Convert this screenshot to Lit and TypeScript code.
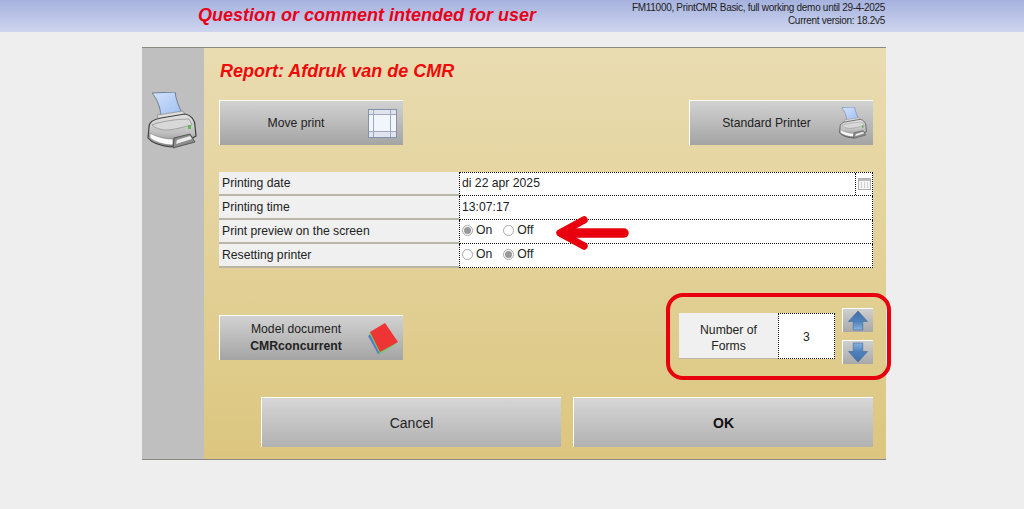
import { LitElement, html, css, svg } from "lit";
import { customElement } from "lit/decorators.js";

const printer = (id: string) => svg`
  <defs>
    <linearGradient id="${id}p" x1="0" y1="0" x2="1" y2="1"><stop offset="0" stop-color="#d5e3fb"/><stop offset="1" stop-color="#9dbdf2"/></linearGradient>
    <linearGradient id="${id}b" x1="0" y1="0" x2="0" y2="1"><stop offset="0" stop-color="#e4e4e4"/><stop offset=".6" stop-color="#bdbdbd"/><stop offset="1" stop-color="#7e7e7e"/></linearGradient>
  </defs>
  <path d="M5 1 L28 0 C29 8 32 15 35 21 L14 24 C13 14 10 7 5 1Z" fill="url(#${id}p)" stroke="#6f7f99" stroke-width="1"/>
  <path d="M10 23 L36 19 L39 25 L12 30Z" fill="#dcdcdc" stroke="#8a8a8a" stroke-width=".7"/>
  <path d="M2 35 C2 29 8 27 14 26 L38 22 C44 23 48 28 48 34 L49 44 C44 47 36 50 30 52 L24 55 C14 54 5 51 1 46Z" fill="url(#${id}b)" stroke="#3f3f3f" stroke-width="1.2"/>
  <path d="M5 33 C12 30 28 27 42 27 L45 33 C36 35 26 38 20 38 C14 38 8 36 5 33Z" fill="#d8d8d8" stroke="#8c8c8c" stroke-width=".7"/>
  <path d="M3 41 C10 45 18 47 26 47 L26 53 C17 53 8 50 3 46Z" fill="#fbfbfb" stroke="#777" stroke-width=".6"/>
  <path d="M27 46 L26 56 L48 50 L43 42Z" fill="#8c8c8c" stroke="#444" stroke-width=".8"/>
  <path d="M30 48 L43 44 L45 47 L29 52Z" fill="#ebebeb"/>
  <rect x="41" y="33" width="3" height="4" fill="#63b85e"/>
`;

const grid = svg`
  <rect x=".5" y=".5" width="28" height="28" fill="#f1f5fc" stroke="#8590ab"/>
  <rect x="1" y="1" width="27" height="5" fill="#dfe4ee"/>
  <rect x="1" y="23" width="27" height="5" fill="#dfe4ee"/>
  <path d="M5.5 1V28M22.5 1V28M1 5.5H28M1 22.5H28" stroke="#a0a8bd" fill="none"/>
`;

const book = svg`
  <path d="M0 13 L10 31 L15 29 L5 9Z" fill="#5a79c9"/>
  <path d="M1 10 L12 31 L28 21 L14 4Z" fill="#6ad06a"/>
  <path d="M17 0 L30 19 L12 29 L2 9Z" fill="#ee3434"/>
`;

const arrowDefs = (id: string, flip: boolean) => svg`
  <defs>
    <linearGradient id="${id}" x1="0" y1="${flip ? 1 : 0}" x2="0" y2="${flip ? 0 : 1}">
      <stop offset="0" stop-color="#3f6fa6"/><stop offset=".55" stop-color="#4f82bd"/><stop offset="1" stop-color="#89b3e2"/>
    </linearGradient>
  </defs>
`;
const up = svg`
  ${arrowDefs("ua", false)}
  <path d="M10 0 L20 11 L15 11 L15 20 L5 20 L5 11 L0 11Z" fill="url(#ua)" stroke="#3b6492" stroke-width=".6"/>
`;
const down = svg`
  ${arrowDefs("da", true)}
  <path d="M10 20 L20 9 L15 9 L15 0 L5 0 L5 9 L0 9Z" fill="url(#da)" stroke="#3b6492" stroke-width=".6"/>
`;

@customElement("app-root")
export class AppRoot extends LitElement {
  static styles = css`
    :host { display: block; width: 1024px; height: 509px; background: #eeeeee; font-family: "Liberation Sans", Arial, sans-serif; color: #111; position: relative; overflow: hidden; }
    .top { height: 32px; background: linear-gradient(#a6b2de, #cdd5ee); display: flex; box-sizing: border-box; }
    .question { margin-left: 198px; width: 340px; font: italic bold 18px/30px "Liberation Sans", sans-serif; color: #e8001a; white-space: nowrap; }
    .version { margin-left: 94px; width: 253px; font-size: 10px; letter-spacing: -.3px; line-height: 13px; text-align: right; padding-top: 1px; color: #222; white-space: nowrap; }
    .dialog { margin: 15px 0 0 142px; width: 744px; height: 413px; box-sizing: border-box; border-top: 1px solid #8a8a80; border-bottom: 1px solid #8a8a80; display: flex; }
    .side { width: 62px; background: #bfbfbf; padding: 44px 0 0 5px; box-sizing: border-box; }
    .side svg { display: block; }
    .main { width: 682px; box-sizing: border-box; padding: 13px 13px 0 15px; background: linear-gradient(#e9dcb1, #dcc67f); display: flex; flex-direction: column; }
    .title { font: italic bold 18px/20px "Liberation Sans", sans-serif; color: #ee0a0a; margin-left: 1px; white-space: nowrap; }
    .row { display: flex; justify-content: space-between; }
    .btn { width: 184px; height: 45px; box-sizing: border-box; border-top: 1px solid #fff; border-left: 1px solid #fff; background: linear-gradient(#d2d2d2, #a4a4a4); display: flex; align-items: center; font-size: 12.2px; position: relative; color: #222; }
    .btn .lbl { flex: 1; text-align: center; line-height: 17px; }
    .btn svg { flex: none; }
    .r1 { margin-top: 19px; }
    .r1 .lbl { padding-left: 4px; }
    .m1 svg { margin-right: 6px; }
    .m2 svg { margin-right: 6px; }
    .table { margin: 27px 0 0 0; width: 654px; display: flex; flex-direction: column; font-size: 12.2px; }
    .tr { display: flex; height: 24px; }
    .th { width: 240px; box-sizing: border-box; background: #f0f0f0; border-bottom: 2px solid #b9b6a6; padding: 0 0 0 3px; line-height: 23px; color: #222; }
    .td { flex: 1; box-sizing: border-box; background: #fff; border: 1px dotted #111; padding-left: 2px; line-height: 20px; display: flex; position: relative; color: #222; }
    .tr + .tr .td { border-top: 0; line-height: 22px; }
    .cal { margin-left: auto; width: 16px; border-left: 1px dotted #111; display: flex; align-items: center; justify-content: center; }
    .tr + .tr .radio { display: flex; align-items: center; padding-bottom: 3px; }
    .dot { width: 11px; height: 11px; box-sizing: border-box; border-radius: 50%; border: 1px solid #a8a8a8; background: #fff; margin-right: 3px; display: flex; align-items: center; justify-content: center; }
    .dot.on::after { content: ""; width: 7px; height: 7px; border-radius: 50%; background: #999; }
    .radio .t { margin-right: 11px; }
    .r3 { margin-top: 40px; align-items: flex-start; }
    .model { width: 184px; height: 45px; margin-top: 7px; }
    .model .lbl { padding-left: 4px; }
    .model svg { margin-right: 5px; }
    .forms { display: flex; width: 194px; margin-right: 0; }
    .flabel { margin-top: 5px; width: 99px; height: 46px; box-sizing: border-box; background: #f0f0f0; border-bottom: 1px solid #bdb9a8; text-align: center; font-size: 12.2px; line-height: 16px; padding-top: 9px; color: #222; }
    .fval { margin-top: 5px; width: 57px; height: 46px; box-sizing: border-box; background: #fff; border: 1px dotted #111; font-size: 12.2px; padding-top: 2px; display: flex; align-items: center; justify-content: center; color: #222; }
    .steps { margin-left: 7px; display: flex; flex-direction: column; gap: 8px; }
    .step { width: 31px; height: 24px; box-sizing: border-box; border-top: 1px solid #fff; border-left: 1px solid #fff; background: linear-gradient(#cfcfcf, #a8a8a8); display: flex; align-items: center; justify-content: center; }
    .r4 { margin-top: 33px; padding-left: 42px; justify-content: flex-start; gap: 12px; }
    .big { width: 300px; height: 50px; box-sizing: border-box; border-top: 1px solid #fff; border-left: 1px solid #fff; background: linear-gradient(#d6d6d6, #b2b2b2); display: flex; align-items: center; justify-content: center; font-size: 14px; color: #222; }
    .big b { color: #111; }
    .ring { position: absolute; left: 666px; top: 293px; width: 225px; height: 87px; box-sizing: border-box; border: 4px solid #e8000f; border-radius: 17px; pointer-events: none; }
    .arrow { position: absolute; left: 553px; top: 214px; pointer-events: none; }
  `;

  render() {
    return html`
      <div class="top">
        <div class="question">Question or comment intended for user</div>
        <div class="version">FM11000, PrintCMR Basic, full working demo until 29-4-2025<br />Current version: 18.2v5</div>
      </div>
      <div class="dialog">
        <div class="side">
          <svg width="50" height="57" viewBox="0 0 50 57">${printer("a")}</svg>
        </div>
        <div class="main">
          <div class="title">Report: Afdruk van de CMR</div>
          <div class="row r1">
            <div class="btn m1"><span class="lbl">Move print</span><svg width="29" height="29" viewBox="0 0 29 29">${grid}</svg></div>
            <div class="btn m2"><span class="lbl">Standard Printer</span><svg width="28" height="32" viewBox="0 0 50 57">${printer("b")}</svg></div>
          </div>
          <div class="table">
            <div class="tr"><div class="th">Printing date</div><div class="td">di 22 apr 2025
              <span class="cal"><svg width="13" height="12" viewBox="0 0 13 12"><rect x=".5" y=".5" width="12" height="11" fill="#f6f6f6" stroke="#b0b0b0"/><rect x="1" y="1" width="11" height="2" fill="#bcbcbc"/><path d="M3 5h1M6 5h1M9 5h1M3 7h1M6 7h1M9 7h1M3 9h1M6 9h1M9 9h1" stroke="#aaa"/></svg></span></div></div>
            <div class="tr"><div class="th">Printing time</div><div class="td">13:07:17</div></div>
            <div class="tr"><div class="th">Print preview on the screen</div><div class="td radio"><span class="dot on"></span><span class="t">On</span><span class="dot"></span><span class="t">Off</span></div></div>
            <div class="tr"><div class="th">Resetting printer</div><div class="td radio"><span class="dot"></span><span class="t">On</span><span class="dot on"></span><span class="t">Off</span></div></div>
          </div>
          <div class="row r3">
            <div class="btn model"><span class="lbl">Model document<br /><b>CMRconcurrent</b></span><svg width="30" height="31" viewBox="0 0 30 31">${book}</svg></div>
            <div class="forms">
              <div class="flabel">Number of<br />Forms</div>
              <div class="fval">3</div>
              <div class="steps">
                <div class="step"><svg width="20" height="21" viewBox="-.5 -.5 21 21">${up}</svg></div>
                <div class="step"><svg width="20" height="21" viewBox="-.5 -.5 21 21">${down}</svg></div>
              </div>
            </div>
          </div>
          <div class="row r4">
            <div class="big">Cancel</div>
            <div class="big"><b>OK</b></div>
          </div>
        </div>
      </div>
      <div class="ring"></div>
      <svg class="arrow" width="78" height="38" viewBox="0 0 78 38"><path d="M71 19 H10" fill="none" stroke="#e8000f" stroke-width="9.5" stroke-linecap="round"/><path d="M31 6 L7 19 L31 32" fill="none" stroke="#e8000f" stroke-width="7.5" stroke-linecap="round" stroke-linejoin="round"/></svg>
    `;
  }
}
